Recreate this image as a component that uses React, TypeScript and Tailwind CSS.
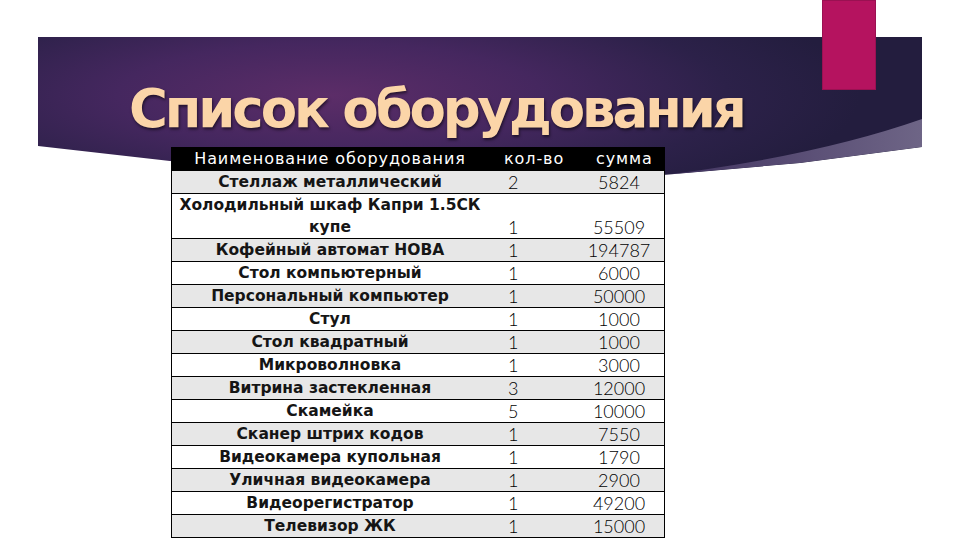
const rows: { name: string[]; qty: string; sum: string }[] = [
  { name: ['Стеллаж металлический'], qty: '2', sum: '5824' },
  { name: ['Холодильный шкаф Капри 1.5СК', 'купе'], qty: '1', sum: '55509' },
  { name: ['Кофейный автомат НОВА'], qty: '1', sum: '194787' },
  { name: ['Стол компьютерный'], qty: '1', sum: '6000' },
  { name: ['Персональный компьютер'], qty: '1', sum: '50000' },
  { name: ['Стул'], qty: '1', sum: '1000' },
  { name: ['Стол квадратный'], qty: '1', sum: '1000' },
  { name: ['Микроволновка'], qty: '1', sum: '3000' },
  { name: ['Витрина застекленная'], qty: '3', sum: '12000' },
  { name: ['Скамейка'], qty: '5', sum: '10000' },
  { name: ['Сканер штрих кодов'], qty: '1', sum: '7550' },
  { name: ['Видеокамера купольная'], qty: '1', sum: '1790' },
  { name: ['Уличная видеокамера'], qty: '1', sum: '2900' },
  { name: ['Видеорегистратор'], qty: '1', sum: '49200' },
  { name: ['Телевизор ЖК'], qty: '1', sum: '15000' },
]

export default function App() {
  return (
    <div className="relative h-[540px] w-[960px] overflow-hidden bg-white font-['DejaVu_Sans',sans-serif]">
      {/* banner */}
      <div className="absolute left-[38px] top-[37px] h-[146px] w-[884px] bg-[radial-gradient(ellipse_60%_90%_at_33%_40%,#5c2d68_0%,#45275f_40%,#2c2149_75%,#231d3e_100%)] [clip-path:polygon(0_0,884px_0,884px_110px,762px_126px,625px_138px,382px_145px,132px_124px,0_109px)]">
        <svg className="absolute left-0 top-0" width="884" height="146" viewBox="0 0 884 146">
          <defs>
            <linearGradient id="sw" x1="0" y1="0" x2="1" y2="0">
              <stop offset="0" stopColor="#3b2c5a" />
              <stop offset="0.5" stopColor="#564a72" />
              <stop offset="1" stopColor="#6e6586" />
            </linearGradient>
          </defs>
          <path d="M600 141 Q 770 122 884 82 L 884 110 L 762 126 L 625 138 Z" fill="url(#sw)" />
        </svg>
      </div>
      <div className="absolute left-[822px] top-0 h-[90px] w-[54px] border border-[#9a1152] bg-[#b5135f]" />

      <div className="relative pl-[129px] pt-[79px]">
        <h1 className="h-[60px] text-[53px] font-bold leading-[60px] tracking-[-3.1px] text-[#fbd5a8] [text-shadow:1px_2px_3px_rgba(0,0,0,0.55)]">
          Список оборудования
        </h1>
      </div>

      <div className="relative ml-[171px] mt-[8px] w-[494px] border-x border-black text-[15.5px] leading-[23px]">
        <div className="grid h-[23px] grid-cols-[316px_88px_88px] bg-black text-[16px] tracking-[0.9px] text-white">
          <div className="text-center">Наименование оборудования</div>
          <div className="pl-[16px]">кол-во</div>
          <div className="pl-[20px]">сумма</div>
        </div>
        {rows.map((r, i) => (
          <div
            key={i}
            className={`grid grid-cols-[316px_88px_88px] items-end border-t border-black ${i % 2 === 0 ? 'bg-[#e7e7e7]' : 'bg-white'}`}
          >
            <div className="text-center font-bold text-[#151515]">
              {r.name.map((n) => (
                <div key={n} className="h-[22px] leading-[22px]">{n}</div>
              ))}
            </div>
            <div className="h-[22px] pl-[20px] font-['Lato',sans-serif] text-[18px] font-light leading-[22px] text-black">
              {r.qty}
            </div>
            <div className="h-[22px] pr-[2px] text-center font-['Lato',sans-serif] text-[18px] font-light leading-[22px] text-black">
              {r.sum}
            </div>
          </div>
        ))}
        <div className="border-t border-black" />
      </div>
    </div>
  )
}
